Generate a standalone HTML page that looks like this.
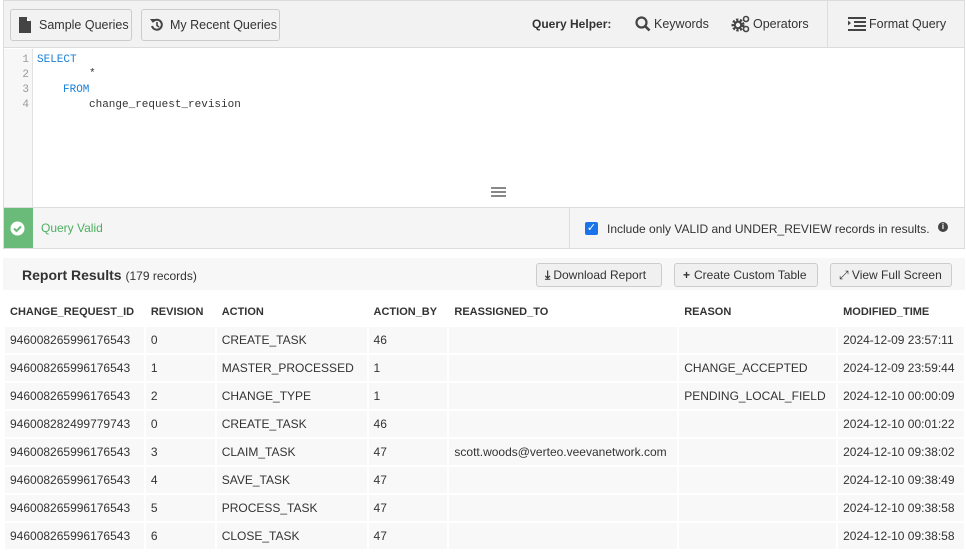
<!DOCTYPE html>
<html><head><style>
*{box-sizing:border-box;margin:0;padding:0}
body{width:966px;height:554px;overflow:hidden;background:#fff;font-family:"Liberation Sans",Arial,sans-serif;font-size:13px;color:#333;position:relative}
.abs{position:absolute;white-space:nowrap}
.box{left:3px;top:0;width:962px;height:249px;border:1px solid #dcdcdc}
.tb{left:4px;top:1px;width:960px;height:47px;background:#f2f2f2;border-bottom:1px solid #dcdcdc}
.btn{position:absolute;height:32px;border:1px solid #ccc;border-radius:3px;background:#f2f2f2;display:flex;align-items:center;font-size:12.5px;color:#333;white-space:nowrap}
.gut{left:4px;top:49px;width:29px;height:158px;background:#f7f7f7;border-right:1px solid #e2e2e2}
.ln{position:absolute;left:4px;width:25px;text-align:right;font-family:"Liberation Mono",monospace;font-size:11px;color:#999}
.code{position:absolute;font-family:"Liberation Mono",monospace;font-size:11px}
.kw{color:#1a7fd6}
.st{left:4px;top:207px;width:960px;height:41px;background:#f5f5f5;border-top:1px solid #dcdcdc}
.rbar{left:3px;top:258px;width:962px;height:32px;background:#f7f7f7}
.b2{position:absolute;top:263px;height:24px;border:1px solid #ccc;border-radius:3px;background:#f0f0f0;font-size:12px;display:flex;align-items:center;padding:0 8px;color:#333;white-space:nowrap}
table{position:absolute;left:3px;top:297px;border-collapse:collapse;font-size:12px}
td,th{height:28px;padding:0 0 0 5px;text-align:left;white-space:nowrap;border:2px solid #fff}
th{font-weight:bold;font-size:11px;color:#333;border-bottom:1px solid #e8e8e8}
td{background:#f8f8f8}
</style></head><body>
<div class="abs box"></div>
<div class="abs tb"></div>
<div class="btn" style="left:10px;top:9px;width:122px;padding-left:7px">
<svg width="14" height="16" viewBox="0 0 14 16"><path d="M1 0h8l4 4v12H1z" fill="#444"/><path d="M9 0v4h4" fill="#fff"/></svg><span style="margin-left:7px">Sample Queries</span></div>
<div class="btn" style="left:141px;top:9px;width:139px;padding-left:8px">
<svg width="14" height="14" viewBox="0 0 14 14"><path d="M3 3.5A5 5 0 1 1 2 8" fill="none" stroke="#444" stroke-width="2"/><path d="M0 1l5 0-2 4z" fill="#444"/><path d="M7 4v3.5l2 1.5" fill="none" stroke="#444" stroke-width="1.6"/></svg><span style="margin-left:6px">My Recent Queries</span></div>
<div class="abs" style="left:532px;top:17px;font-weight:bold;font-size:12px">Query Helper:</div>
<svg class="abs" style="left:635px;top:16px" width="16" height="16" viewBox="0 0 16 16"><circle cx="6.5" cy="6.5" r="5" fill="none" stroke="#444" stroke-width="2.2"/><path d="M10 10l4.5 4.5" stroke="#444" stroke-width="2.6"/></svg>
<div class="abs" style="left:654px;top:17px;font-size:12.5px">Keywords</div>
<svg class="abs" style="left:731px;top:15px" width="20" height="18" viewBox="0 0 20 18"><circle cx="7" cy="10" r="5" fill="none" stroke="#444" stroke-width="3" stroke-dasharray="2.2 1.4"/><circle cx="7" cy="10" r="3.2" fill="none" stroke="#444" stroke-width="2"/><circle cx="15" cy="4" r="2.5" fill="none" stroke="#444" stroke-width="1.6"/><circle cx="15" cy="14" r="2.5" fill="none" stroke="#444" stroke-width="1.6"/></svg>
<div class="abs" style="left:753px;top:17px;font-size:12.5px">Operators</div>
<div class="abs" style="left:827px;top:1px;width:1px;height:47px;background:#dcdcdc"></div>
<svg class="abs" style="left:848px;top:17px" width="18" height="14" viewBox="0 0 18 14"><rect x="0" y="0" width="18" height="2" fill="#444"/><rect x="6" y="4" width="12" height="2" fill="#444"/><rect x="6" y="8" width="12" height="2" fill="#444"/><rect x="0" y="12" width="18" height="2" fill="#444"/><path d="M0 3.5l3 2.5-3 2.5z" fill="#444"/></svg>
<div class="abs" style="left:869px;top:17px;font-size:12.5px">Format Query</div>
<div class="abs gut"></div>
<div class="ln" style="top:54px">1</div><div class="ln" style="top:69px">2</div><div class="ln" style="top:84px">3</div><div class="ln" style="top:99px">4</div>
<div class="code kw" style="left:37px;top:54px">SELECT</div>
<div class="code" style="left:89px;top:68px">*</div>
<div class="code kw" style="left:63px;top:84px">FROM</div>
<div class="code" style="left:89px;top:99px">change_request_revision</div>
<div class="abs" style="left:491px;top:187px;width:15px;height:2px;background:#888;box-shadow:0 4px #888,0 8px #888"></div>
<div class="abs st"></div>
<div class="abs" style="left:4px;top:208px;width:29px;height:40px;background:#6abb7a"></div>
<svg class="abs" style="left:10px;top:221px" width="15" height="15" viewBox="0 0 15 15"><circle cx="7.5" cy="7.5" r="7" fill="#fff"/><path d="M4 7.5l2.5 2.5 4.5-4.5" fill="none" stroke="#6abb7a" stroke-width="2"/></svg>
<div class="abs" style="left:41px;top:221px;color:#4caf5f;font-size:12px">Query Valid</div>
<div class="abs" style="left:569px;top:208px;width:1px;height:40px;background:#dcdcdc"></div>
<div class="abs" style="left:585px;top:222px;width:13px;height:13px;background:#1a73e8;border-radius:2px;color:#fff;font-size:11px;line-height:13px;text-align:center">✓</div>
<div class="abs" style="left:607px;top:222px;font-size:12px">Include only VALID and UNDER_REVIEW records in results.</div>
<div class="abs" style="left:938px;top:222px;width:10px;height:10px;border-radius:50%;background:#444;color:#fff;font-size:8px;line-height:10px;text-align:center;font-weight:bold">i</div>
<div class="abs rbar"></div>
<div class="abs" style="left:22px;top:267px;font-size:14px;font-weight:bold">Report Results <span style="font-weight:normal;font-size:12px">(179 records)</span></div>
<div class="b2" style="left:536px;width:126px"><b style="margin-right:3px">⤓</b>Download Report</div>
<div class="b2" style="left:674px;width:144px"><b style="margin-right:4px">+</b>Create Custom Table</div>
<div class="b2" style="left:830px;width:122px">⤢ View Full Screen</div>
<table>
<tr><th style="width:141px">CHANGE_REQUEST_ID</th><th style="width:71px">REVISION</th><th style="width:152px">ACTION</th><th style="width:81px">ACTION_BY</th><th style="width:230px">REASSIGNED_TO</th><th style="width:159px">REASON</th><th style="width:128px">MODIFIED_TIME</th></tr>
<tr><td>946008265996176543</td><td>0</td><td>CREATE_TASK</td><td>46</td><td></td><td></td><td>2024-12-09 23:57:11</td></tr>
<tr><td>946008265996176543</td><td>1</td><td>MASTER_PROCESSED</td><td>1</td><td></td><td>CHANGE_ACCEPTED</td><td>2024-12-09 23:59:44</td></tr>
<tr><td>946008265996176543</td><td>2</td><td>CHANGE_TYPE</td><td>1</td><td></td><td>PENDING_LOCAL_FIELD</td><td>2024-12-10 00:00:09</td></tr>
<tr><td>946008282499779743</td><td>0</td><td>CREATE_TASK</td><td>46</td><td></td><td></td><td>2024-12-10 00:01:22</td></tr>
<tr><td>946008265996176543</td><td>3</td><td>CLAIM_TASK</td><td>47</td><td>scott.woods@verteo.veevanetwork.com</td><td></td><td>2024-12-10 09:38:02</td></tr>
<tr><td>946008265996176543</td><td>4</td><td>SAVE_TASK</td><td>47</td><td></td><td></td><td>2024-12-10 09:38:49</td></tr>
<tr><td>946008265996176543</td><td>5</td><td>PROCESS_TASK</td><td>47</td><td></td><td></td><td>2024-12-10 09:38:58</td></tr>
<tr><td>946008265996176543</td><td>6</td><td>CLOSE_TASK</td><td>47</td><td></td><td></td><td>2024-12-10 09:38:58</td></tr>
</table>
</body></html>
